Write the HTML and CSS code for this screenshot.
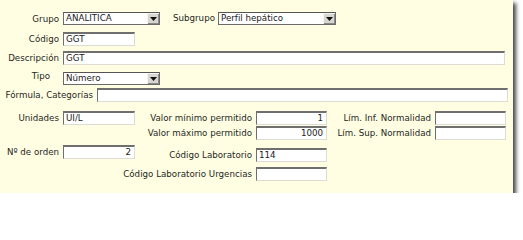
FILE: index.html
```html
<!DOCTYPE html>
<html lang="es">
<head>
<meta charset="utf-8">
<title>Prueba</title>
<link rel="stylesheet" href="styles.css">
</head>
<body>
<div class="panel">
  <div class="row r1">
    <span class="lbl lbl-main">Grupo</span>
    <div class="select sel-grupo">
      <span class="sel-val">ANALITICA</span>
      <span class="sel-btn"><svg width="7" height="4" viewBox="0 0 7 4"><path d="M0 0H7L3.5 4Z" fill="#111"/></svg></span>
    </div>
    <span class="lbl lbl-sub">Subgrupo</span>
    <div class="select sel-sub">
      <span class="sel-val">Perfil hepático</span>
      <span class="sel-btn"><svg width="7" height="4" viewBox="0 0 7 4"><path d="M0 0H7L3.5 4Z" fill="#111"/></svg></span>
    </div>
  </div>
  <div class="row r2">
    <span class="lbl lbl-main">Código</span>
    <div class="inp w72">GGT</div>
  </div>
  <div class="row r3">
    <span class="lbl lbl-main">Descripción</span>
    <div class="inp wdesc">GGT</div>
  </div>
  <div class="row r4">
    <span class="lbl lbl-main lbl-tipo">Tipo</span>
    <div class="select sel-tipo">
      <span class="sel-val">Número</span>
      <span class="sel-btn"><svg width="7" height="4" viewBox="0 0 7 4"><path d="M0 0H7L3.5 4Z" fill="#111"/></svg></span>
    </div>
  </div>
  <div class="row r5">
    <span class="lbl lbl-form">Fórmula, Categorías</span>
    <div class="inp wform"></div>
  </div>
  <div class="block">
    <div class="col c1">
      <div class="row">
        <span class="lbl lbl-main">Unidades</span>
        <div class="inp w72">UI/L</div>
      </div>
      <div class="row c1-r2">
        <span class="lbl lbl-main">Nº de orden</span>
        <div class="inp w72 num">2</div>
      </div>
    </div>
    <div class="col c2">
      <div class="row end">
        <span class="lbl lbl-r">Valor mínimo permitido</span>
        <div class="inp w71 num">1</div>
      </div>
      <div class="row end c2-r2">
        <span class="lbl lbl-r">Valor máximo permitido</span>
        <div class="inp w71 num">1000</div>
      </div>
      <div class="row end c2-r3">
        <span class="lbl lbl-r">Código Laboratorio</span>
        <div class="inp w71">114</div>
      </div>
      <div class="row end c2-r4">
        <span class="lbl lbl-r">Código Laboratorio Urgencias</span>
        <div class="inp w71"></div>
      </div>
    </div>
    <div class="col c3">
      <div class="row end">
        <span class="lbl lbl-r">Lím. Inf. Normalidad</span>
        <div class="inp w71"></div>
      </div>
      <div class="row end c2-r2">
        <span class="lbl lbl-r">Lím. Sup. Normalidad</span>
        <div class="inp w71"></div>
      </div>
    </div>
  </div>
</div>
</body>
</html>
```

FILE: styles.css
```css
html, body {
  margin: 0;
  padding: 0;
  background: #ffffff;
}

body {
  font-family: "DejaVu Sans", Verdana, sans-serif;
  font-size: 8.7px;
  color: #262626;
}

.panel {
  width: 513px;
  height: 193px;
  box-sizing: border-box;
  background: #fffee2;
  box-shadow: 3px 3px 4px rgba(50, 50, 50, 0.9);
  padding-top: 12px;
}

.row {
  display: flex;
  align-items: center;
}

.row.end {
  justify-content: flex-end;
}

.lbl {
  white-space: nowrap;
  line-height: 10px;
  flex: none;
}

.lbl-main {
  width: 59px;
  text-align: right;
  margin-right: 4px;
}

.lbl-tipo {
  padding-right: 9px;
  box-sizing: border-box;
  align-self: flex-start;
  margin-top: -1px;
}

.lbl-sub {
  width: 41px;
  text-align: right;
  margin-left: 13px;
  margin-right: 4px;
  align-self: flex-start;
  margin-top: 1px;
}

.lbl-form {
  width: 93px;
  text-align: right;
  margin-right: 4px;
}

.lbl-r {
  margin-right: 4px;
}

.r2 { margin-top: 7px; }
.r3 { margin-top: 5px; }
.r4 { margin-top: 7px; }
.r5 { margin-top: 3px; }

.block {
  display: flex;
  align-items: flex-start;
  margin-top: 9px;
}

.col {
  display: flex;
  flex-direction: column;
  flex: none;
}

.c1 { width: 135px; }
.c2 { width: 192px; }
.c3 { width: 179px; }

.c1-r2 { margin-top: 20px; }
.c2-r2 { margin-top: 1px; }
.c2-r3 { margin-top: 8px; }
.c2-r4 { margin-top: 5px; }

.inp {
  height: 14px;
  box-sizing: border-box;
  background: #ffffff;
  border-top: 2px solid #6f6f6f;
  border-left: 1px solid #6f6f6f;
  border-right: 1px solid #dcdcd4;
  border-bottom: 1px solid #dcdcd4;
  padding: 0 3px 0 2px;
  line-height: 11px;
  color: #1a1a1a;
  white-space: nowrap;
  flex: none;
}

.inp.num { text-align: right; }

.w72 { width: 72px; }
.w71 { width: 71px; }
.wdesc { width: 442px; }
.wform { width: 411px; }

.select {
  display: flex;
  height: 13px;
  box-sizing: border-box;
  background: #ffffff;
  border: 1px solid #6a6a6a;
  border-top-color: #555555;
  flex: none;
}

.sel-grupo, .sel-tipo { width: 97px; }
.sel-sub { width: 118px; }

.sel-val {
  flex: 1;
  padding-left: 2px;
  line-height: 11px;
  color: #1a1a1a;
  white-space: nowrap;
  overflow: hidden;
}

.sel-btn {
  width: 12px;
  display: flex;
  align-items: center;
  justify-content: center;
  background: #d8d6d0;
  border-left: 1px solid #f4f4f0;
  border-top: 1px solid #f4f4f0;
  box-shadow: inset -1px -1px 0 #8a8a86;
  box-sizing: border-box;
}
```
